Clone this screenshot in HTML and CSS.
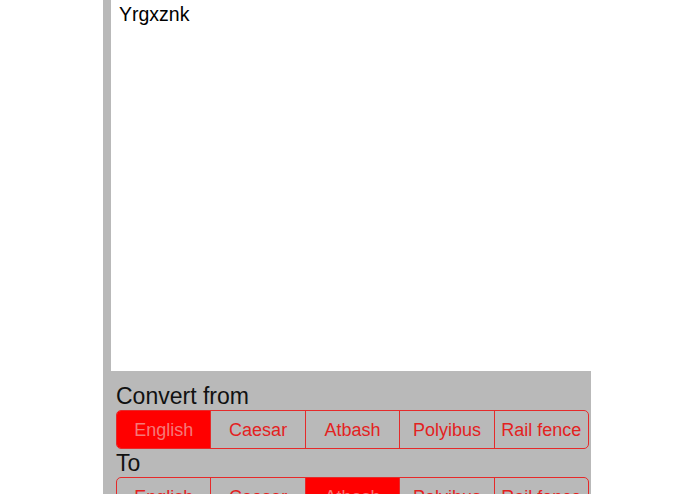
FILE: index.html
```html
<!DOCTYPE html>
<html>
<head>
<meta charset="utf-8">
<link rel="stylesheet" href="styles.css">
</head>
<body>
<div class="panel">
  <div class="output">Yrgxznk</div>
  <div class="controls">
    <div class="label">Convert from</div>
    <div class="seg">
      <div class="opt sel">English</div>
      <div class="opt">Caesar</div>
      <div class="opt">Atbash</div>
      <div class="opt">Polyibus</div>
      <div class="opt">Rail fence</div>
    </div>
    <div class="label">To</div>
    <div class="seg">
      <div class="opt">English</div>
      <div class="opt">Caesar</div>
      <div class="opt sel">Atbash</div>
      <div class="opt">Polyibus</div>
      <div class="opt">Rail fence</div>
    </div>
  </div>
</div>
</body>
</html>
```
FILE: styles.css
```css
html, body {
  margin: 0;
  padding: 0;
  background: #ffffff;
  font-family: "Liberation Sans", Arial, sans-serif;
  overflow: hidden;
  height: 494px;
}
.panel {
  margin-left: 103px;
  width: 488px;
  background: #b9b9b9;
  padding-left: 8px;
  box-sizing: border-box;
  height: 494px;
}
.output {
  background: #ffffff;
  height: 371px;
  box-sizing: border-box;
  padding: 3px 8px;
  font-size: 19.5px;
  line-height: 22px;
  color: #000;
}
.controls {
  padding: 11px 2px 0 5px;
}
.label {
  font-size: 23px;
  line-height: 28px;
  color: #111;
}
.seg {
  display: flex;
  border: 1px solid #e52a2a;
  border-radius: 5px;
  overflow: hidden;
  height: 39px;
  box-sizing: border-box;
}
.opt {
  flex: 1;
  text-align: center;
  font-size: 18px;
  line-height: 35px;
  padding-top: 2px;
  color: #e3221f;
  border-left: 1px solid #e52a2a;
  white-space: nowrap;
}
.opt:first-child {
  border-left: none;
}
.opt.sel {
  background: #ff0000;
  color: #f57878;
}
```
